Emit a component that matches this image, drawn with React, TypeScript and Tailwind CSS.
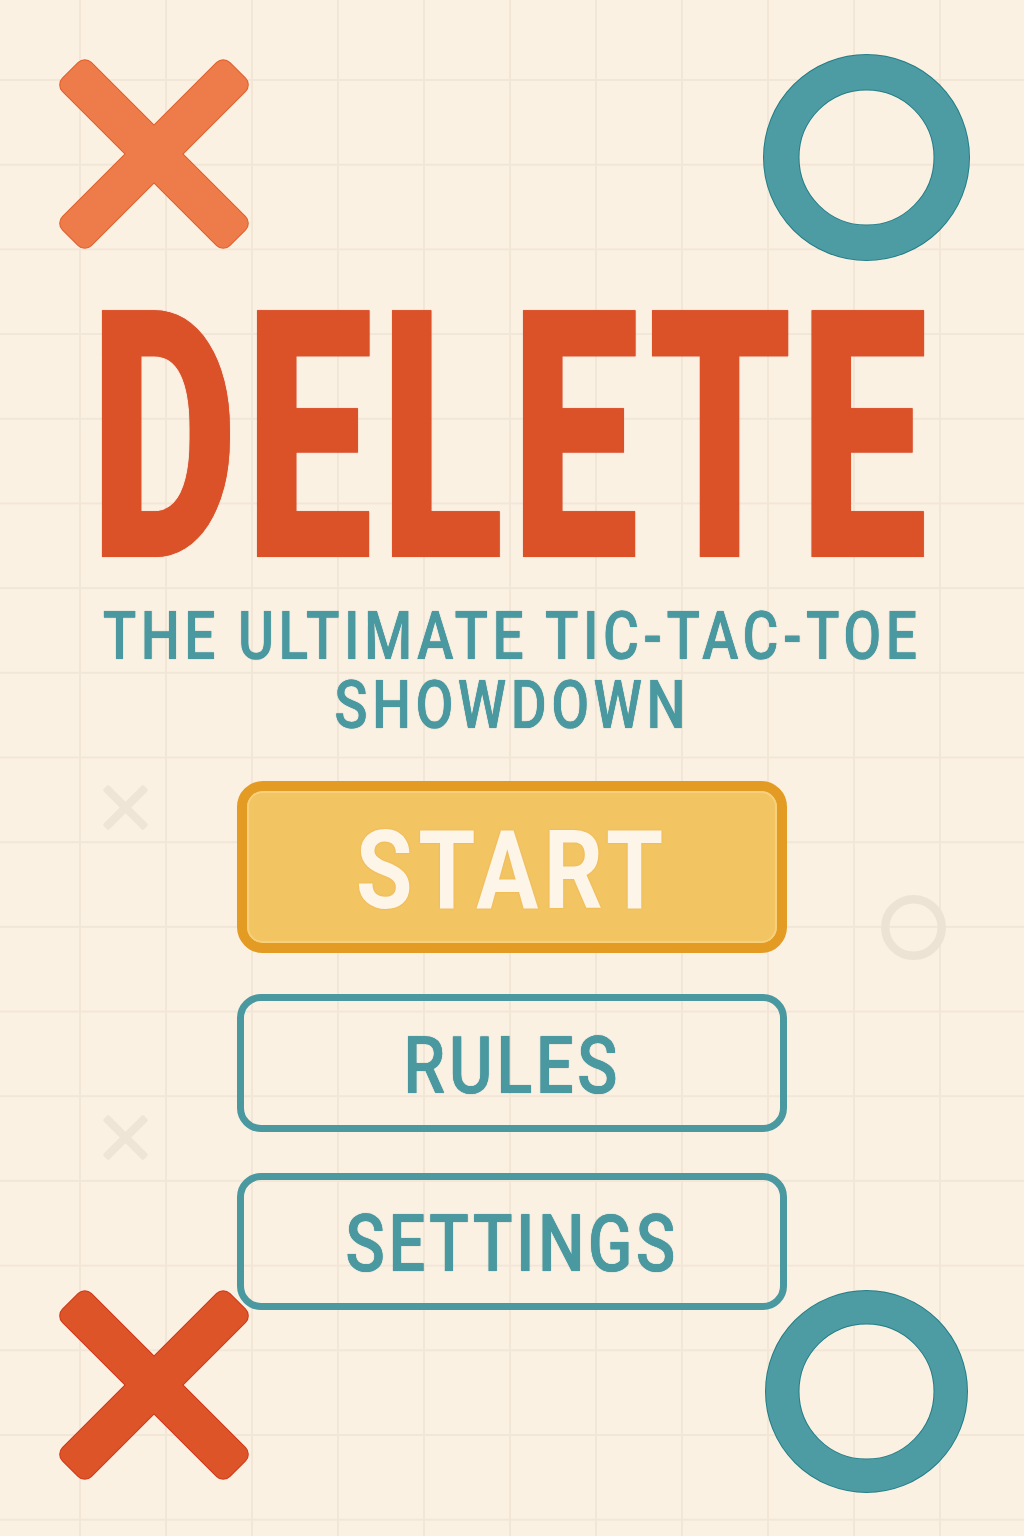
import React from 'react'

type CrossProps = { size: number; bar: number; fill: string; edge?: string; className?: string }

// X mark: two rounded bars, outline drawn underneath so the centre stays clean
function Cross({ size, bar, fill, edge, className }: CrossProps) {
  const c = size / 2
  const r = bar * 0.22
  // lengthen a little so the rounded corners still reach the box edge
  const len = size * Math.SQRT2 - bar + r * 0.8
  const bars = (color: string, extra: number) =>
    [45, -45].map((deg) => (
      <rect
        key={deg + color}
        x={c - len / 2 - extra}
        y={c - bar / 2 - extra}
        width={len + extra * 2}
        height={bar + extra * 2}
        rx={r + extra}
        fill={color}
        transform={`rotate(${deg} ${c} ${c})`}
      />
    ))
  return (
    <svg width={size} height={size} viewBox={`0 0 ${size} ${size}`} className={className} overflow="visible">
      {edge && bars(edge, 1)}
      {bars(fill, 0)}
    </svg>
  )
}

type RingProps = { outer: number; inner: number; fill: string; edge?: string; className?: string }

function Ring({ outer, inner, fill, edge, className }: RingProps) {
  const size = outer * 2
  const r = (outer + inner) / 2
  const w = outer - inner
  return (
    <svg width={size} height={size} viewBox={`0 0 ${size} ${size}`} className={className} overflow="visible">
      {edge && <circle cx={outer} cy={outer} r={r} fill="none" stroke={edge} strokeWidth={w + 2} />}
      <circle cx={outer} cy={outer} r={r} fill="none" stroke={fill} strokeWidth={w} />
    </svg>
  )
}

export default function App() {
  return (
    <div className="relative h-[1536px] w-[1024px] overflow-hidden bg-[#fbf1e3] bg-[linear-gradient(to_right,#f2e6d6_2px,transparent_2px),linear-gradient(to_bottom,#f2e6d6_2px,transparent_2px)] bg-size-[86px_84.7px] bg-position-[-7px_-5.7px] font-[Roboto,sans-serif]">
      {/* faint background marks */}
      <Cross size={45} bar={8} fill="#efe5d7" className="absolute left-[103px] top-[785px]" />
      <Cross size={45} bar={8} fill="#efe5d7" className="absolute left-[103px] top-[1115px]" />
      <Ring outer={32.5} inner={24} fill="#ede3d5" className="absolute left-[880.5px] top-[894.5px]" />

      {/* bottom corner marks */}
      <Cross size={190} bar={40} fill="#dd5428" edge="#d1381b" className="absolute left-[59px] top-[1290px]" />
      <Ring outer={100.5} inner={68} fill="#4d9ba3" edge="#237d87" className="absolute left-[765.5px] top-[1290.5px]" />

      <div className="relative flex flex-col">
        <div className="flex items-start justify-between pl-[59px] pr-[55px] pt-[55px]">
          <Cross size={190} bar={40} fill="#ee7b4a" edge="#e0602c" className="mt-[4px]" />
          <Ring outer={102.5} inner={68} fill="#4d9ba3" edge="#237d87" />
        </div>

        <h1 className="mt-[5px] flex justify-center text-[347px] font-black leading-none tracking-[0.03em] text-[#dc5228] [text-shadow:0_0_1px_#c9361a]">
          <span className="inline-block scale-x-[0.66]">DELETE</span>
        </h1>

        <p className="mt-[-10px] flex flex-col items-center text-[66px] font-medium leading-[69px] tracking-[0.08em] text-[#4a98a0] [text-shadow:0_0_1px_#1f7c86]">
          <span className="inline-block scale-x-[0.835] whitespace-nowrap">THE ULTIMATE TIC-TAC-TOE</span>
          <span className="inline-block scale-x-[0.835] whitespace-nowrap">SHOWDOWN</span>
        </p>

        <div className="mt-[41px] flex flex-col items-center gap-[41px]">
          <button className="flex h-[172px] w-[550px] rounded-[26px] border-[10px] border-[#e39b23] bg-[#f2c462] p-0">
            <span className="flex flex-1 items-center justify-center rounded-[16px] border-2 border-[#f6d07a] pt-[8px] text-[110px] font-bold leading-none tracking-[0.06em] text-[#fdf6e8] [text-shadow:0_0_1.5px_#e8a43a]">
              <span className="inline-block scale-x-[0.84]">START</span>
            </span>
          </button>
          <button className="flex h-[138px] w-[550px] items-center justify-center rounded-[24px] border-[7px] border-[#4a98a0] pt-[6px] text-[79px] font-medium leading-none tracking-[0.05em] text-[#4a98a0] [text-shadow:0_0_1px_#1f7c86]">
            <span className="inline-block scale-x-[0.85]">RULES</span>
          </button>
          <button className="flex h-[137px] w-[550px] items-center justify-center rounded-[24px] border-[7px] border-[#4a98a0] pt-[6px] text-[79px] font-medium leading-none tracking-[0.05em] text-[#4a98a0] [text-shadow:0_0_1px_#1f7c86]">
            <span className="inline-block scale-x-[0.83]">SETTINGS</span>
          </button>
        </div>
      </div>
    </div>
  )
}
